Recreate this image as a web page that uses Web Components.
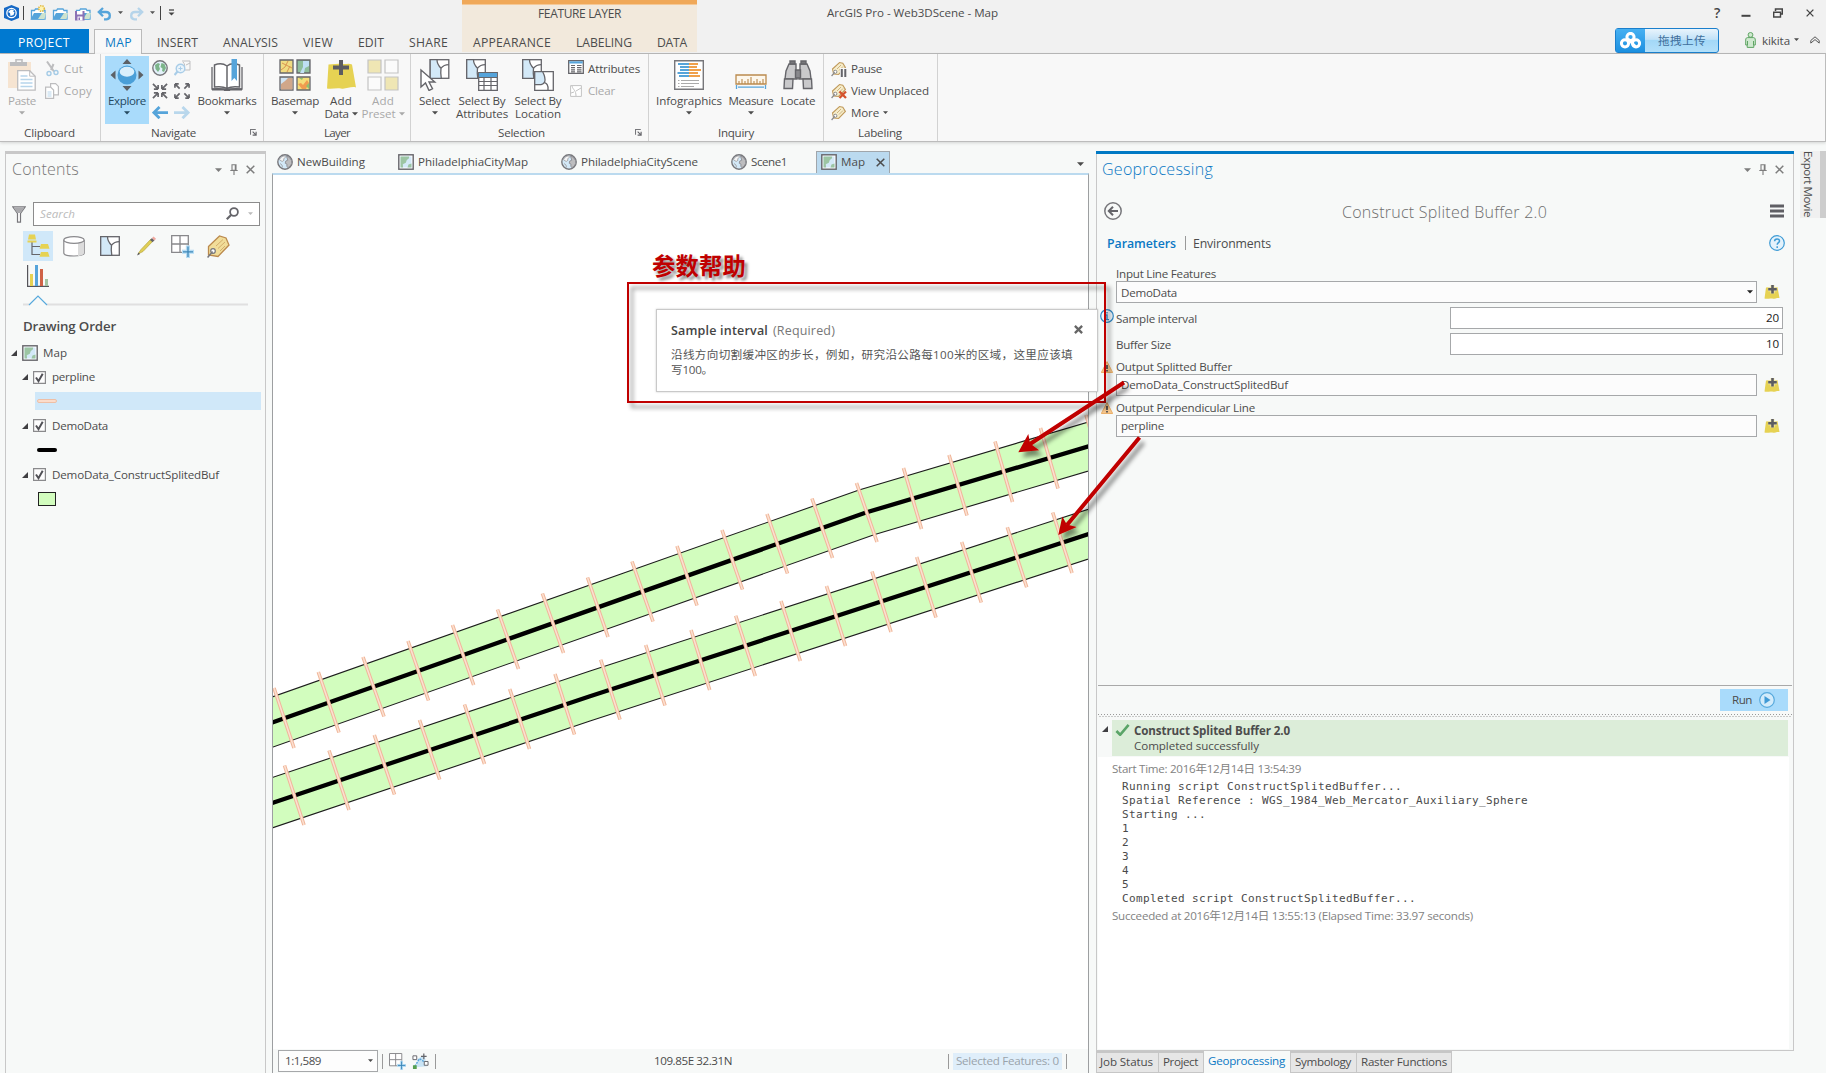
<!DOCTYPE html>
<html lang="en"><head><meta charset="utf-8"><title>ArcGIS Pro - Web3DScene - Map</title>
<style>
html,body{margin:0;height:100%;overflow:hidden;background:#f7f9f8}
body{font-family:"Open Sans","Noto Sans CJK SC",sans-serif;font-size:11.6px;color:#4c4c4c}
</style></head><body><app-window></app-window>
<script>
const fitted=[];
function define(name,css,html){
  const t=document.createElement('template');
  t.innerHTML='<style>*{box-sizing:border-box}'+css+'</style>'+html;
  customElements.define(name,class extends HTMLElement{
    constructor(){super();this.attachShadow({mode:'open'}).appendChild(document.importNode(t.content,true));}
  });
}
/* Text run with a fixed advance width: tracking is adjusted to fill it. */
customElements.define('t-x',class extends HTMLElement{
  constructor(){super();this.attachShadow({mode:'open'}).innerHTML='<style>:host{display:inline-block;white-space:pre;flex:none;line-height:16px}:host([v]){writing-mode:vertical-rl}span{display:inline-block}</style><span><slot></slot></span>';}
  connectedCallback(){fitted.push(this);}
  fit(){
    const w=+this.getAttribute('w');if(!w)return;
    const v=this.hasAttribute('v'),s=this.shadowRoot.querySelector('span');
    const r=s.getBoundingClientRect(),n=[...this.textContent].length;
    s.style.letterSpacing=((w-(v?r.height:r.width))/n).toFixed(3)+'px';
    this.style[v?'height':'width']=w+'px';
  }
});
const G='#65656a',B='#56a4da',Y='#e6d253';
const tag=`<path d="M1.5 8 8.5 1.5l3.3.8 2.6 4.2-6.8 7-5-.5z" fill="#f6edcb" stroke="#c09a5c" stroke-width="1.1"/><path d="m6 8 4-4M8 9.5l4-4" stroke="#c8ab77" stroke-width=".9"/><circle cx="4.3" cy="10.8" r="1.6" fill="#fff" stroke="#8a8a8c"/><path d="m.6 15 3-3.6" stroke="#8a8a8c" stroke-width="1.2"/>`;
const sel=()=>`<g fill="#fff" stroke="${G}" stroke-width="1.3"><rect x=".7" y=".7" width="18.6" height="18.6"/><path d="M.7.7h6.8c0 3 1.5 6 4 8.5-.5 4-.5 6 .3 10.1H.7z" fill="#d3e9f8"/><path d="M11.5 9.2c2-2.6 4.500-3.6 7.800-3.6" fill="none"/></g>`;
const globe=`<circle cx="8" cy="8" r="7.2" fill="#d3e9f8" stroke="#77777b" stroke-width="1.4"/><path d="M2.200 5.500 5 2.500l2.800-.8.7 1.600-1.800 1.400.2 1.600-1.700 1.200z" fill="#f4f4f4" stroke="#9a9a9d" stroke-width=".8"/><path d="m9.500 2.200 2.500.8 2.500 3.500.2 3-1.500 2.500-2.200 1.700-1.200-1.200.2-2.300-1.800-1 .6-2.200 2-.8z" fill="#bdbdbf" stroke="#85858a" stroke-width=".8"/><path d="m3 9.500 2 1.500.5 2.500" fill="none" stroke="#9a9a9d" stroke-width=".8"/>`;
const mapico=`<rect x=".8" y=".8" width="14.4" height="14.4" fill="#fff" stroke="#65656a" stroke-width="1.4"/><path d="M2.500 2.500h11v11h-11z" fill="#d3e9f8"/><path d="M2.500 2.500h8.700l-.4 2-2 1.400-1 2.800-3 1.600.3 3.200H2.500z" fill="#9cc5a3"/><path d="m13.500 9.500-3 1-1 3h4z" fill="#9cc5a3"/>`;
const add=`<path d="M3.500 5.500 17 4.500c3 1.500 6-1 10 1l4 23c-5-1.500-10 2-15 1-5-1-9 1-14 0z" fill="${Y}"/><path d="M16 1v15M8 8.500h16" stroke="#5c5c61" stroke-width="4"/>`;
const arrs=o=>{let d=o?'M1 1l5 5M1 1h4M1 1v4M16 1l-5 5M16 1h-4M16 1v4M1 16l5-5M1 16h4M1 16v-4M16 16l-5-5M16 16h-4M16 16v-4':'M1 1l5 5M6.500 6.500v-4.500M6.500 6.500H2M16 1l-5 5M10.500 6.500v-4.500M10.500 6.500H15M1 16l5-5M6.500 10.500v4.500M6.500 10.500H2M16 16l-5-5M10.500 10.500v4.500M10.500 10.500H15';return `<path d="${d}" fill="none" stroke="#65656a" stroke-width="1.800"/>`};
const pencil=`<path d="m2 18 3-4.500L15 3l2 2L7 15.500z" fill="#e0cf55" stroke="#b8a640" stroke-width=".7"/><path d="m14 4 2-2 2.500 2.300-2 2z" fill="#66666b"/><path d="m16 2 1.500-1.500 2.500 2.300-1.500 1.700z" fill="#f1a9a0"/><path d="m1 19.500 1.500-3 1.500 1.400z" fill="#555"/>`;
const folder=`<path d="M1.500 5.500h3l1-1.500h5.500l1 1.500h3V14h-13.500z" fill="#fff" stroke="${B}" stroke-width="1.300"/><path d="M.5 14.500 4 8h12l-2 6.500z" fill="${B}"/><path d="m8 14 4-6h4l-1.500 6z" fill="#cde3cf"/>`;
const ICONS={
app:[15,16,`<path d="M7.500 0 15 3v10l-7.500 3L0 13V3z" fill="#1769c6"/><circle cx="7.500" cy="8" r="5.300" fill="#fff"/><circle cx="7.500" cy="8" r="4" fill="#1769c6"/><path d="M7 4.500 4 7l2 1 .5 3 3-1 1-3-1.500-.5 1-1.500z" fill="#fff"/>`],
fnew:[16,16,folder+`<circle cx="11.500" cy="3.500" r="2.800" fill="#fff3b0" stroke="#e0b840" stroke-dasharray="1.300 1" stroke-width="1.600"/>`],
fopen:[16,16,folder],
fsave:[17,16,`<g transform="translate(1)">${folder}</g><path d="M1 6h9.500v9.500H1z" fill="#8b72b5"/><path d="M3 6h5.500v3.500H3z" fill="#fff"/><path d="M3.500 11.500h5v4h-5z" fill="#fff"/><path d="M4.500 12.500H6V15H4.500z" fill="#8b72b5"/>`],
undo:[15,14,`<path d="M2 5h7c5 0 5 7 .5 7.300H7M6 1 1.800 5 6 9.200" fill="none" stroke="${B}" stroke-width="2.300"/>`],
redo:[15,14,`<path d="M13 5H6c-5 0-5 7-.5 7.300H8M9 1l4.200 4L9 9.200" fill="none" stroke="#b5d4ea" stroke-width="2.300"/>`],
qat:[7,8,`<path d="M1 1h5" stroke="#444" stroke-width="1.300"/><path d="M.5 3.500h6l-3 3z" fill="#444"/>`],
caret:[6,4,`<path d="M0 .3h6L3 3.500z" fill="currentColor"/>`],
help:[16,16,`<circle cx="8" cy="8" r="7.300" fill="#e4f2fb" stroke="#3e9bd5" stroke-width="1.200"/><path d="M5.600 6.200c0-3 4.900-3 4.900-.2 0 1.700-2.300 1.700-2.300 3.800M8.200 11.300v1.700" fill="none" stroke="#3e9bd5" stroke-width="1.500"/>`],
min:[10,10,`<path d="M.5 8.800h9" stroke="#444" stroke-width="2"/>`],
restore:[10,10,`<path d="M2.500 3V.9H9.300V6H7.800" fill="none" stroke="#444" stroke-width="1.500"/><path d="M.7 4.200h6.800v4.800H.7z" fill="none" stroke="#444" stroke-width="1.400"/>`],
close:[9,9,`<path d="m.7.7 7.600 7.600M8.300.7.7 8.300" stroke="currentColor" stroke-width="1.500"/>`],
closeb:[9,9,`<path d="m.9.9 7.200 7.200M8.100.9.9 8.100" stroke="currentColor" stroke-width="2.300"/>`],
pin:[8,11,`<path d="M2 .7h4v5.500H2zM.3 6.500h7.400M4 6.500V11M5.300 1v5" fill="none" stroke="#7d7d7d" stroke-width="1.100"/>`],
baidu:[21,17,`<g fill="none" stroke="#fff" stroke-width="3"><circle cx="10.500" cy="5" r="3.600"/><circle cx="5" cy="11.300" r="3.600"/><circle cx="16" cy="11.300" r="3.600"/></g><path d="m8 7 8 8" stroke="#fff" stroke-width="2.500"/>`],
user:[11,16,`<g fill="#cfe8cf" stroke="#5fa564"><circle cx="5.500" cy="2.900" r="2.400"/><path d="M.7 13V8c0-2 1-2.400 2-2.400h5.600c1 0 2 .4 2 2.400v5H8.800v2.400H2.200V13zM2.500 13V9M8.500 13V9"/></g>`],
collapse:[10,8,`<path d="M.8 4.500 5 .8l4.200 3.700v2.600L5 3.600.8 7.100z" fill="none" stroke="#555"/>`],
paste:[30,32,`<path d="M1 3h23v26H1z" fill="#f6e4d1"/><path d="M3 3h17v4H3z" fill="#bdbdbf"/><path d="M9 3V.8h6V3" fill="none" stroke="#bdbdbf" stroke-width="1.600"/><path d="M10.700 11.700h12l5.500 5.500v14h-17.500z" fill="#fff" stroke="#bdbdbf" stroke-width="1.300"/><path d="M22.700 11.700v5.500h5.500" fill="none" stroke="#bdbdbf"/><path d="M13.500 17h7M13.500 20.500h12M13.500 24h12M13.500 27.500h12" stroke="#b7d5eb" stroke-width="1.500"/>`],
cut:[14,16,`<path d="m2 .5 7 10M8.500 3 6 9" stroke="#bdbdbf" stroke-width="2"/><circle cx="4" cy="12.500" r="2" fill="none" stroke="#a5cbe6" stroke-width="1.400"/><circle cx="11" cy="11.500" r="2" fill="none" stroke="#a5cbe6" stroke-width="1.400"/>`],
copy:[14,16,`<g fill="#fff" stroke="#bdbdbf" stroke-width="1.200"><path d="M5.600.6h5l2.800 2.800v8.500H5.600z"/><path d="M.6 4.100h5l3 3v8.300h-8z"/></g><path d="M2.500 9h4M2.500 11h4M2.500 13h4" stroke="#b7d5eb"/>`],
explore:[34,32,`<g fill="#5c6166"><path d="M12.500 5 17 0l4.500 5zM12.500 27l4.500 5 4.500-5zM5.500 11.500.5 16l5 4.500zM28.500 11.500l5 4.500-5 4.500z"/></g><circle cx="17" cy="16" r="9.500" fill="#4a9fd8"/><ellipse cx="17" cy="12.700" rx="7.300" ry="5" fill="#d9effc"/>`],
gfull:[16,16,`<circle cx="8" cy="8" r="7.200" fill="#e3f1fa" stroke="#77777b" stroke-width="1.400"/><path d="M3 5 6 3l2 1-1 2 1 3-2 3-2.500-3zM9.500 3l3 1 1.500 4-2 4-2-1 .5-2.500-2-1.500z" fill="#7db58a"/>`],
zsel:[17,16,`<path d="M8 1h8v9h-5" fill="none" stroke="#c0c0c2"/><path d="M9 2c2 2 2 4 1 7M12 5l4-2" stroke="#c0c0c2" fill="none"/><circle cx="6.500" cy="8.500" r="4.300" fill="#eaf4fb" stroke="#a9cde8" stroke-width="1.400"/><path d="m.5 15 3-3.500" stroke="#a9cde8" stroke-width="2.200"/><path d="M4.500 8.500h4M6.500 6.500v4" stroke="#a9cde8"/>`],
fin:[17,17,arrs(0)],fout:[17,17,arrs(1)],
left:[17,14,`<path d="M2 7h15M8 1 2 7l6 6" fill="none" stroke="${B}" stroke-width="3"/>`],
right:[17,14,`<path d="M15 7H0M9 1l6 6-6 6" fill="none" stroke="#b9d7ec" stroke-width="3"/>`],
book:[32,32,`<path d="M1 8v22c5-.5 10-.5 15 .5 5-1 10-1 15-.5V8" fill="#fff" stroke="${G}" stroke-width="1.300"/><path d="M3.500 28V6c5-2 9-1.500 12.500 1 3-2.500 7.500-3 12.500-1v22c-5-.7-9-.5-12.500 1.500-3.500-2-7.500-2.200-12.500-1.500zM16 7v22" fill="#fff" stroke="${G}" stroke-width="1.500"/><path d="M1 30.500h12c1 1.500 5 1.500 6 0h12" stroke="${G}" stroke-width="2" fill="none"/><path d="M20.500 0h5.500v22l-2.700-3-2.800 3z" fill="${B}"/>`],
basemap:[32,32,`<g stroke="#65656a" stroke-width="1.300"><path d="M1 1h13v13H1z" fill="#f0dc82"/><path d="M18 1h13v13H18z" fill="#8fbf9c"/><path d="M1 18h13v13H1z" fill="#d0e4f3"/><path d="M18 18h13v13H18z" fill="#f4de7a"/></g><path d="M2 11 6 8l3-6M3 4l10 5M8 13l3-6" stroke="#d99550" fill="none"/><path d="M24 2h6v5l-4 2-1 5h-4l3-6z" fill="#bfe0f4"/><path d="M2 25 6 22l3-3h4.500v11.500H2z" fill="#d0a78a"/><path d="M19 25l3-1 2 2 4-5 2 3-3 6h-4z" fill="#f09c4f"/><path d="M20 19l3 2 1-2zM27 27l3-3v6z" fill="#8dc06f"/>`],
add:[32,32,add],
adds:[16,16,`<path d="M2 3.500 8 3c2 .5 4-.5 5.500.3L15.500 14c-2.500-.5-5 1-7.500.6-2.500-.5-4.500.6-7.500 0z" fill="${Y}"/><path d="M8.500 1v8.500M4.200 5.200h8.600" stroke="#f4ecb5" stroke-width="4"/><path d="M8.500 1v8.500M4.200 5.200h8.600" stroke="#5c5c61" stroke-width="2.600"/>`],
preset:[32,32,`<g stroke="#c3c3c3" stroke-width="1.200" fill="#fbfbfb"><path d="M1 1h13v13H1z" fill="#efe6b4"/><path d="M18 1h13v13H18z"/><path d="M1 18h13v13H1z"/><path d="M18 18h13v13H18z" fill="#efe6b4"/></g>`],
select:[30,32,`<g transform="translate(9.500)">${sel()}</g><path d="M1 11v17l4.500-4 3.500 7.500 3.500-1.700-3.500-6.800h5.800z" fill="#fff" stroke="${G}" stroke-width="1.400"/>`],
selattr:[32,32,sel()+`<path d="M12.700 13.700h18.600v17.600H12.700z" fill="#fff" stroke="${G}" stroke-width="1.300"/><path d="M13 14h18v4H13z" fill="${B}"/><path d="M13 18.500h18M13 22.500h18M13 26.500h18M18 18v13M25 18v13" stroke="${G}" stroke-width="1.200"/>`],
selloc:[32,32,sel()+`<g fill="#fff" stroke="${G}" stroke-width="1.300"><path d="M12.700 12.700h18.600v18.600H12.700z"/><path d="M12.700 12.700h8c2 4 3 7 2 10-1 3-4 3-6 3h-4z" fill="#d3e9f8"/><path d="M22.500 23.500c2 1 4 2 3.500 7.500" fill="none"/></g>`],
attrs:[16,14,`<path d="M.7.7h14.600v12.600H.7z" fill="#fff" stroke="${G}" stroke-width="1.300"/><path d="M1.300 1.300h13.400V3.500H1.300z" fill="${B}"/><path d="M3 5.500h4M3 7.700h4M3 9.800h4M3 11.800h4M9 5.500h4.500M9 7.700h4.500M9 9.800h4.500M9 11.800h4.500" stroke="${G}" stroke-width="1.200"/>`],
clear:[12,12,`<path d="M.6.600h10.800v10.800H.6z" fill="#fff" stroke="#c3c3c3"/><path d="M2 1c1 4 4 4 4 10M6 6l5-3M1 8l3-1" fill="none" stroke="#c3c3c3"/>`],
info:[30,30,`<path d="M.7.7h28.600v28.600H.7z" fill="#fff" stroke="#77777b" stroke-width="1.400"/><path d="M4 4h11M6 7h9M6 10h9M3.500 13h11.500M5 16h10" stroke="${B}" stroke-width="2"/><path d="M15 4h9M15 7h8M15 10h12M15 13h9M15 16h11" stroke="#f0a04b" stroke-width="2"/><path d="M4 20.500h1.500M7 20.500h18M4 23.500h1.500M7 23.500h18M4 26.500h1.500M7 26.500h13" stroke="#aaa" stroke-width="1.200"/>`],
measure:[32,15,`<path d="M1 1h30v9H1z" fill="#fdf7ec" stroke="#bb8a4e" stroke-width="1.300"/><path d="M4 10V7M7 10V5M10 10V7M13 10V5M16 10V3M19 10V7M22 10V5M25 10V7M28 10V5" stroke="#bb8a4e" stroke-width="1.100"/><path d="M1.500 11v4M30.500 11v4M3 13.200h26" stroke="${B}" stroke-width="1.300"/>`],
locate:[30,30,`<g fill="#c9c9cb" stroke="#65656a" stroke-width="1.400"><path d="M6 4h7v6l1 9H2l1-8zM17 4h7l3 7 1 8H16l1-9z"/><path d="M7 1h5v3H7zM18 1h5v3h-5z" fill="#77777b"/><path d="M1.500 19h8.500l-.5 9.500H1zM20 19h8.500l.5 9.500h-8.500z"/><path d="M12.500 10h5v8h-5z" fill="#88888c"/></g>`],
pause:[16,16,tag+`<path d="M9 7h7v9H9z" fill="#f8f8f8"/><path d="M10.800 8v8M14.300 8v8" stroke="#65656a" stroke-width="2"/>`],
unplaced:[16,16,tag+`<path d="m8.500 8.500 6.500 6.500M15 8.500 8.500 15" stroke="#d4522c" stroke-width="2.300"/>`],
more:[16,16,tag],
launch:[8,8,`<path d="M.6 6.500V.6h6" fill="none" stroke="#77777b" stroke-width="1.200"/><path d="m3 3 3.500 3.500M7 3v4H3" fill="none" stroke="#65656a" stroke-width="1.300"/>`],
globe:[16,16,globe],map:[16,16,mapico],
funnel:[14,17,`<path d="M.8.8h12.400L8.500 7.500v8.700h-3V7.500z" fill="#fff" stroke="#77777b" stroke-width="1.200"/><path d="M1.500 1.500h11L8.500 7h-3z" fill="#aaaaad"/>`],
mag:[13,13,`<circle cx="8" cy="5" r="3.900" fill="none" stroke="#65656a" stroke-width="1.800"/><path d="M.8 12.200 5.300 7.700" stroke="#65656a" stroke-width="2.200"/>`],
tree:[24,24,`<path d="M6 8v12.500h8M6 12.500h8" fill="none" stroke="#65656a" stroke-width="1.200"/><g fill="${Y}"><path d="M3 .5h6l1 5H2zM1.500 6.500h9V8.500h-9zM15 10h7l1.500 4.800h-10zM15 18h7l1.500 4.800h-10z"/></g>`],
cyl:[22,21,`<path d="M.8 4v13c0 4 20.400 4 20.400 0V4" fill="#fff" stroke="#8a8a8d" stroke-width="1.200"/><path d="M15 7.300c3-.5 6-1.500 6-3V17c0 1.500-3 2.500-6 3z" fill="#dcdcdc"/><ellipse cx="11" cy="4" rx="10.200" ry="3.300" fill="#fff" stroke="#8a8a8d" stroke-width="1.200"/>`],
selb:[20,20,sel()],pencil:[20,20,pencil],
gridadd:[23,23,`<path d="M.7.7h16.600v16.600H.7zM9 .7v16.600M.7 9h16.600" fill="#fff" stroke="#88888b" stroke-width="1.300"/><path d="M17 10.500v12.500M11 16.800h12" stroke="#f7f9f8" stroke-width="6"/><path d="M17 10.500v12.500M11 16.800h12" stroke="#b5dcf4" stroke-width="4"/><path d="M17 11.500V22M12 16.800h10" stroke="#3d87b8" stroke-width="1.300"/>`],
tagb:[23,23,`<path d="M1.500 11.500 12.500 1 19 3l3 7-11 11.500L1.500 20z" fill="#f1dd99" stroke="#bb8a4e" stroke-width="1.300"/><path d="m9 11 7-6.500M11 13.500l7-6.500M13 16l5-5" stroke="#d3ae6d"/><circle cx="6" cy="16" r="2.300" fill="#fff" stroke="#77777b" stroke-width="1.200"/><path d="m.6 22.500 5-6" stroke="#77777b" stroke-width="1.500"/>`],
chart:[22,22,`<path d="M.6 0v21.400H22" fill="none" stroke="#55555a" stroke-width="1.200"/><path d="M3 9h3v12H3z" fill="${Y}"/><path d="M8 0h3v21H8z" fill="${B}"/><path d="M13 4h3v17h-3z" fill="#cf6246"/><path d="M18 14h3v7h-3z" fill="#a4c5a2"/>`],
exp:[7,7,`<path d="M7 0v7H0z" fill="#3f3f42"/>`],
chk:[13,13,`<path d="M.6.600h11.800v11.800H.6z" fill="#fdfdfd" stroke="#8a8a8c" stroke-width="1.200"/><path d="m3 6.500 2.500 3.700L9.700 2.800" fill="none" stroke="#505055" stroke-width="2"/>`],
back:[18,18,`<circle cx="9" cy="9" r="8.200" fill="none" stroke="#77777b" stroke-width="1.500"/><path d="M14 9H5M9 4.700 4.800 9 9 13.300" fill="none" stroke="#65656a" stroke-width="2"/>`],
burger:[14,14,`<path d="M0 2h14M0 7h14M0 12h14" stroke="#5f5f64" stroke-width="3"/>`],
inf:[14,14,`<circle cx="7" cy="7" r="6.300" fill="#eef6fb" stroke="#2f88c4" stroke-width="1.200"/><path d="M7 3v1.600M5.500 6H7v4.500M5 10.600h4" fill="none" stroke="#2f88c4" stroke-width="1.400"/>`],
warn:[12,12,`<path d="M6 .6 11.700 11.500H.3z" fill="#f6c68c" stroke="#eab06a"/><path d="M6 4v4M6 9v1.500" stroke="#4d4d4d" stroke-width="1.800"/>`],
run:[16,16,`<circle cx="8" cy="8" r="7.300" fill="#d2ebfb" stroke="#57a9dc" stroke-width="1.200"/><path d="M5.500 4v8l6-4z" fill="#3f9ad6"/>`],
ok:[16,13,`<path d="m1.500 7.500 4 4L14.500 1" fill="none" stroke="#5aa468" stroke-width="2.800"/>`],
sketch:[18,17,`<path d="M4 15 6 6l7-4 3 12z" fill="#c9e4f5"/><path d="M3 14 8 6l6 4" stroke="${B}" stroke-width="1.500" stroke-dasharray="2 1.200" fill="none"/><path d="M1 3h4v4H1zM13 9h4v4h-4z" fill="#fff" stroke="#65656a"/><path d="M1 13h4v4H1z" fill="#56a04f"/><path d="M12.500.500v6M9.500 3.500h6" stroke="#65656a" stroke-width="1.300"/>`]
};
/* Inline vector icon, picked by name. */
customElements.define('ui-icon',class extends HTMLElement{
  constructor(){super();this.attachShadow({mode:'open'});}
  connectedCallback(){
    const [w,h,d]=ICONS[this.getAttribute('n')],W=+this.getAttribute('w')||w,H=+this.getAttribute('h')||h*W/w;
    this.shadowRoot.innerHTML=`<style>:host{display:inline-block;flex:none;width:${W}px;height:${H}px;line-height:0}svg{display:block}</style><svg width="${W}" height="${H}" viewBox="0 0 ${w} ${h}" preserveAspectRatio="none">${d}</svg>`;
  }
});
define('title-bar',`:host{display:flex;height:54px;background:#f1f1f1;border-bottom:1px solid #bababa}
.l{width:462px;display:flex;flex-direction:column}.q{height:29px;display:flex;align-items:center;padding:0 0 3px 4px;color:#555}
.t{display:flex;height:24px;font-size:12.200px;line-height:24px}.t t-x{line-height:27px}
.p{background:#0079d0;color:#fff;width:89px;padding-left:18px}.m{width:48px;height:25px;margin:0 15px 0 5px;background:#f8f8f8;border:1px solid #bababa;border-bottom:0;color:#0a78c4;padding-left:10px}.m t-x{line-height:25px}
.f{width:235px;height:52px;background:#f2e9dc;border-top:4px solid #f0a858;box-shadow:inset 0 1px #f5c896;display:flex;flex-direction:column;font-size:12px}
.f .a{height:25px;flex:none;padding-left:76px;line-height:20px}.f .a t-x{line-height:20px}.f .b{display:flex;padding:4px 0 0 11px;height:23px;font-size:12.200px}.f .b t-x{line-height:19px;height:19px;margin-top:0}.f .b{padding-top:4px}
.c{width:918px;padding:5px 0 0 130px}.r{flex:1;display:flex;flex-direction:column}.w{height:26px;display:flex;align-items:center;padding-left:99px;color:#444}
.u{display:flex;align-items:center;height:26px;margin-top:1px}.bd{width:104px;height:25px;border:1px solid #1b7fcc;border-radius:3px;display:flex;background:linear-gradient(#e9f4fc,#c1e2f8 45%,#a3d8f7 50%,#b3e0fa)}
.bd i{width:29px;background:linear-gradient(#46b0f2,#1c90e0);display:flex;align-items:center;justify-content:center}.bd t-x{margin-left:13px;color:#3f6f9c;line-height:24px}`,
`<div class="l"><div class="q"><ui-icon n="app"></ui-icon><i style="width:1px;height:14px;background:#444;margin:0 6px 0 4px"></i><ui-icon n="fnew"></ui-icon><ui-icon n="fopen" style="margin:0 6px"></ui-icon><ui-icon n="fsave"></ui-icon><ui-icon n="undo" style="margin:2px 6px 0 6px"></ui-icon><ui-icon n="caret" w="5"></ui-icon><ui-icon n="redo" style="margin:2px 6px 0 6px"></ui-icon><ui-icon n="caret" w="5"></ui-icon><i style="width:1px;height:14px;background:#444;margin:0 7px 0 5px"></i><ui-icon n="qat"></ui-icon></div>
<div class="t"><div class="p"><t-x w="52">PROJECT</t-x></div><div class="m"><t-x w="27">MAP</t-x></div><t-x w="41">INSERT</t-x><t-x w="55" style="margin-left:25px">ANALYSIS</t-x><t-x w="30" style="margin-left:25px">VIEW</t-x><t-x w="26" style="margin-left:25px">EDIT</t-x><t-x w="39" style="margin-left:25px">SHARE</t-x></div></div>
<div class="f"><div class="a"><t-x w="83">FEATURE LAYER</t-x></div><div class="b"><t-x w="78">APPEARANCE</t-x><t-x w="56" style="margin-left:25px">LABELING</t-x><t-x w="30" style="margin-left:25px">DATA</t-x></div></div>
<div class="c"><t-x w="171">ArcGIS Pro - Web3DScene - Map</t-x></div>
<div class="r"><div class="w"><t-x w="8" style="font-size:14px;font-weight:600">?</t-x><ui-icon n="min" style="margin:-2px 22px 0 19px"></ui-icon><ui-icon n="restore"></ui-icon><ui-icon n="close" w="8" style="margin-left:23px"></ui-icon></div>
<div class="u"><div class="bd"><i><ui-icon n="baidu"></ui-icon></i><t-x w="48">拖拽上传</t-x></div><ui-icon n="user" style="margin:0 6px 0 26px"></ui-icon><t-x w="28" style="margin-top:2px">kikita</t-x><ui-icon n="caret" w="5" style="margin:0 11px 0 4px"></ui-icon><ui-icon n="collapse"></ui-icon></div></div>`);
define('ribbon-group',`:host{display:flex;flex-direction:column;flex:none;height:87px;border-right:1px solid #d2d2d2}.c{display:flex;height:70px;padding-top:2px}.f{display:flex;height:16px;margin-top:1px;position:relative}::slotted([slot=label]){line-height:16px}`,
`<div class="c"><slot></slot></div><div class="f"><slot name="label"></slot></div>`);
define('big-button',`:host{display:flex;flex:none;flex-direction:column;align-items:center;height:68px;padding-top:3px}:host([on]){background:#a9dbfb;color:#25495f}:host([off]){color:#a9a9a9}
.i{height:32px;display:flex;align-items:center;justify-content:center}.t{display:flex;flex-direction:column;align-items:center;margin-top:3px}.t ::slotted(*){line-height:13px!important;height:13px}.t ::slotted(ui-icon){margin-top:4px;height:4px}`,
`<div class="i"><slot name="icon"></slot></div><div class="t"><slot></slot></div>`);
define('tool-row',`:host{display:flex;align-items:center;height:22px}:host([off]){color:#a9a9a9}.i{width:16px;margin-right:4px;display:flex;justify-content:center}`,`<div class="i"><slot name="icon"></slot></div><slot></slot>`);
define('ribbon-bar',`:host{display:flex;height:88px;background:#f8f8f8;border-bottom:1px solid #bcbcbc;border-right:1px solid #bcbcbc;box-shadow:0 1px 3px rgba(0,0,0,.15);position:relative}
.col{display:flex;flex-direction:column;padding-top:2px}.g{display:grid;grid-template-columns:16px 17px;column-gap:6px;align-content:start;row-gap:7px;margin:4px 6px 0 3px}.r{display:flex;height:13px;align-items:center}.r t-x{line-height:13px}`,
`<ribbon-group style="width:101px"><big-button off style="width:34px;margin-left:5px"><ui-icon slot="icon" n="paste"></ui-icon><t-x w="28">Paste</t-x><ui-icon n="caret"></ui-icon></big-button>
<div class="col" style="margin-left:5px"><tool-row off><ui-icon slot="icon" n="cut"></ui-icon><t-x w="19">Cut</t-x></tool-row><tool-row off><ui-icon slot="icon" n="copy"></ui-icon><t-x w="28">Copy</t-x></tool-row></div><t-x slot="label" w="51" style="margin-left:24px">Clipboard</t-x></ribbon-group>
<ribbon-group style="width:163px"><big-button on style="width:44px;margin-left:4px"><ui-icon slot="icon" n="explore"></ui-icon><t-x w="38">Explore</t-x><ui-icon n="caret"></ui-icon></big-button>
<div class="g"><ui-icon n="gfull"></ui-icon><ui-icon n="zsel"></ui-icon><ui-icon n="fin" w="16"></ui-icon><ui-icon n="fout" w="16"></ui-icon><ui-icon n="left" w="16"></ui-icon><ui-icon n="right" w="16"></ui-icon></div>
<big-button style="width:62px;margin-left:-1px"><ui-icon slot="icon" n="book"></ui-icon><t-x w="59">Bookmarks</t-x><ui-icon n="caret"></ui-icon></big-button><t-x slot="label" w="45" style="margin-left:50px">Navigate</t-x><ui-icon slot="label" n="launch" w="7" style="margin:4px 0 0 54px"></ui-icon></ribbon-group>
<ribbon-group style="width:147px"><big-button style="width:52px;margin-left:5px"><ui-icon slot="icon" n="basemap"></ui-icon><t-x w="48">Basemap</t-x><ui-icon n="caret"></ui-icon></big-button>
<big-button style="width:38px;margin-left:1px"><ui-icon slot="icon" n="add"></ui-icon><t-x w="22">Add</t-x><div class="r"><t-x w="24">Data</t-x><ui-icon n="caret" style="margin-left:3px"></ui-icon></div></big-button>
<big-button off style="width:46px"><ui-icon slot="icon" n="preset"></ui-icon><t-x w="22">Add</t-x><div class="r"><t-x w="34">Preset</t-x><ui-icon n="caret" style="margin-left:3px"></ui-icon></div></big-button><t-x slot="label" w="26" style="margin-left:60px">Layer</t-x></ribbon-group>
<ribbon-group style="width:238px"><big-button style="width:35px;margin-left:6px"><ui-icon slot="icon" n="select"></ui-icon><t-x w="31">Select</t-x><ui-icon n="caret"></ui-icon></big-button>
<big-button style="width:54px;margin-left:3px"><ui-icon slot="icon" n="selattr"></ui-icon><t-x w="47">Select By</t-x><t-x w="52">Attributes</t-x></big-button>
<big-button style="width:50px;margin-left:4px"><ui-icon slot="icon" n="selloc"></ui-icon><t-x w="47">Select By</t-x><t-x w="46">Location</t-x></big-button>
<div class="col" style="margin-left:5px"><tool-row><ui-icon slot="icon" n="attrs" style="margin-top:-4px"></ui-icon><t-x w="52">Attributes</t-x></tool-row><tool-row off><ui-icon slot="icon" n="clear"></ui-icon><t-x w="27">Clear</t-x></tool-row></div><t-x slot="label" w="47" style="margin-left:87px">Selection</t-x><ui-icon slot="label" n="launch" w="7" style="margin:4px 0 0 90px"></ui-icon></ribbon-group>
<ribbon-group style="width:175px"><big-button style="width:68px;margin-left:6px"><ui-icon slot="icon" n="info"></ui-icon><t-x w="66">Infographics</t-x><ui-icon n="caret"></ui-icon></big-button>
<big-button style="width:48px;margin-left:4px"><ui-icon slot="icon" n="measure" style="margin-top:12px"></ui-icon><t-x w="45">Measure</t-x><ui-icon n="caret"></ui-icon></big-button>
<big-button style="width:38px;margin-left:4px"><ui-icon slot="icon" n="locate"></ui-icon><t-x w="35">Locate</t-x></big-button><t-x slot="label" w="36" style="margin-left:69px">Inquiry</t-x></ribbon-group>
<ribbon-group style="width:114px"><div class="col" style="margin-left:7px"><tool-row><ui-icon slot="icon" n="pause"></ui-icon><t-x w="31">Pause</t-x></tool-row><tool-row><ui-icon slot="icon" n="unplaced"></ui-icon><t-x w="78">View Unplaced</t-x></tool-row><tool-row style="height:23px"><ui-icon slot="icon" n="more"></ui-icon><t-x w="28">More</t-x><ui-icon n="caret" w="5" style="margin-left:4px"></ui-icon></tool-row></div><t-x slot="label" w="44" style="margin-left:34px">Labeling</t-x></ribbon-group>`);
define('pane-head',`:host{display:flex;height:33px;border-top:3px solid #c8c8c8;align-items:center;color:#777;padding:0 10px 0 6px;font-size:16px;font-weight:300;flex:none}:host([on]){border-color:#0079c4;color:#0a78c4}.s{flex:1}.b{display:flex;align-items:center;color:#7d7d7d}::slotted(t-x){line-height:30px!important}`,
`<slot></slot><div class="s"></div><div class="b"><ui-icon n="caret" w="7" style="margin-top:3px"></ui-icon><ui-icon n="pin" style="margin:0 8px 0 8px"></ui-icon><ui-icon n="close"></ui-icon></div>`);
define('contents-pane',`:host{display:flex;flex-direction:column;width:261px;margin-left:5px;border:1px solid #c8c8c8;border-top:0;border-bottom:0}
.s{display:flex;margin-top:18px;height:24px;padding-left:6px}.bx{width:227px;height:24px;border:1px solid #8c8c8c;background:#fff;margin-left:7px;display:flex;align-items:center;padding-left:6px;color:#bbb;font-style:italic}
.ic{display:flex;margin:5px 0 0 17px;height:30px;align-items:center}.hl{width:30px;height:30px;background:#d0e8f9;display:flex;align-items:center;justify-content:center}
.tr{display:flex;height:24.4px;align-items:center}.li{width:20px;height:4px;border-radius:2px}`,
`<pane-head style="margin:0 -1px;padding:0 11px 0 7px"><t-x w="67">Contents</t-x></pane-head><div class="s"><ui-icon n="funnel" style="margin-top:4px"></ui-icon><div class="bx"><t-x w="35">Search</t-x><ui-icon n="mag" style="margin:-2px 0 0 151px"></ui-icon><ui-icon n="caret" w="5" style="margin-left:9px"></ui-icon></div></div>
<div class="ic"><div class="hl"><ui-icon n="tree"></ui-icon></div><ui-icon n="cyl" style="margin-left:10px"></ui-icon><ui-icon n="selb" style="margin-left:15px"></ui-icon><ui-icon n="pencil" style="margin-left:16px"></ui-icon><ui-icon n="gridadd" style="margin-left:15px"></ui-icon><ui-icon n="tagb" style="margin-left:13px"></ui-icon></div>
<ui-icon n="chart" style="margin:4px 0 0 21px"></ui-icon>
<svg width="225" height="12" style="margin:8px 0 0 17px;display:block"><path d="M0 9.500h6M24 9.500h201" stroke="#e0e0e0" stroke-width="2"/><path d="M6 10 15 1l9 9" fill="none" stroke="#57a9dc" stroke-width="1.200"/></svg>
<div style="height:33.500px;padding:9px 0 0 17px;font-size:13.300px;font-weight:600;line-height:20px"><t-x w="93" style="line-height:20px">Drawing Order</t-x></div>
<div class="tr" style="padding-left:5px"><ui-icon n="exp" w="6"></ui-icon><ui-icon n="map" style="margin:0 5px"></ui-icon><t-x w="24">Map</t-x></div>
<div class="tr" style="padding-left:16px"><ui-icon n="exp" w="6"></ui-icon><ui-icon n="chk" style="margin:0 6px 0 5px"></ui-icon><t-x w="43">perpline</t-x></div>
<div class="tr"><div style="margin-left:29px;width:226px;height:18px;background:#d0e8f9;padding:7px 0 0 2px"><div class="li" style="background:#fbdccb;border:1px solid #eebfa6"></div></div></div>
<div class="tr" style="padding-left:16px"><ui-icon n="exp" w="6"></ui-icon><ui-icon n="chk" style="margin:0 6px 0 5px"></ui-icon><t-x w="56">DemoData</t-x></div>
<div class="tr" style="padding:0 0 1px 31px"><div class="li" style="background:#000"></div></div>
<div class="tr" style="padding-left:16px"><ui-icon n="exp" w="6"></ui-icon><ui-icon n="chk" style="margin:0 6px 0 5px"></ui-icon><t-x w="167">DemoData_ConstructSplitedBuf</t-x></div>
<div class="tr" style="padding:0 0 1px 32px"><div style="width:18px;height:14px;background:#d2fdbe;border:1px solid #222"></div></div>`);
/* Perpendicular sampling lines: x1,y1,x2,y2 for both roads. */
const T1=[[274,688,294,748],[318.3,672,339,732.5],[363,657,384,716.5],[408,641,428.5,700.5],[452.5,625,473.7,685],[497.5,609.5,518.5,669],[542.4,593.5,563.5,653],[587.5,577.5,608,637],[632,561.5,653,621.5],[677,546,697,605.5],[722,530,742.5,589.5],[767,514,787.5,573.5],[812,498.5,832.5,558],[856.5,483,877,542],[903.5,468,921.5,529],[949,455,967,515.5],[995,441.5,1012.5,502],[1040.5,428,1058,488.5],[1086,415,1104,475.5],
[284.5,765.5,304,825],[329,750.5,349,810],[374.3,735,394.5,794.5],[419.5,720,439.7,779.5],[464.5,704.5,484.5,764],[509.7,689,529.5,749],[555,674,574.5,734.5],[600.7,659.7,620,719.5],[645.7,645,665,705.5],[691,630,709.7,690],[735.7,615.7,755.3,676],[781,601,800.3,661],[826.5,586,845.5,646],[872,571.5,891,632],[916.7,557,936,617.5],[961.7,542,981.3,602.5],[1007.3,527.3,1026.7,587.3],[1052.7,512.5,1072,573]].map(a=>`M${a[0]} ${a[1]}L${a[2]} ${a[3]}`).join('');
define('map-tab',`:host{display:flex;height:22px;align-items:center;flex:none}:host([on]){background:#bbdaef;border:1px solid #a0a6ab;border-bottom:0;width:74px;padding:0 0 1px 4px}::slotted(t-x){margin-left:4px;line-height:20px!important}`,`<slot></slot>`);
define('map-view',`:host{display:flex;flex-direction:column;width:817px;margin-left:6px}
.t{display:flex;height:22px;padding-left:5px}.m{border:1px solid #9d9fa1;border-top:2px solid #bbdaef;border-bottom:0;height:876px;background:#fff}.m svg{display:block}
.s{height:24px;display:flex;align-items:center;border:solid #9d9fa1;border-width:0 1px;padding-left:5px}.cb{width:100px;height:22px;border:1px solid #a6a8aa;background:#fdfdfd;display:flex;align-items:center;padding-left:6px}.v{width:1px;height:15px;background:#9a9a9a}`,
`<div class="t"><map-tab><ui-icon n="globe"></ui-icon><t-x w="68">NewBuilding</t-x></map-tab><map-tab style="margin-left:33px"><ui-icon n="map"></ui-icon><t-x w="110">PhiladelphiaCityMap</t-x></map-tab><map-tab style="margin-left:33px"><ui-icon n="globe"></ui-icon><t-x w="117">PhiladelphiaCityScene</t-x></map-tab><map-tab style="margin-left:33px"><ui-icon n="globe"></ui-icon><t-x w="36">Scene1</t-x></map-tab><map-tab on style="margin-left:29px"><ui-icon n="map"></ui-icon><t-x w="24">Map</t-x><ui-icon n="close" w="9" style="margin-left:11px"></ui-icon></map-tab><ui-icon n="caret" w="7" style="margin:11px 0 0 187px"></ui-icon></div>
<div class="m"><svg width="815" height="874" viewBox="273 175 815 874"><g fill="#d2fdbe" stroke="#1c1c1c" stroke-width="1.100"><path d="M260 701.300 273 696.700 859 490 1100 418.500V467.500L874 534.700 273 747l-13 5z"/><path d="M260 781.700 273 777.300 590 671 1100 505.500V555.300L590 721 273 827.700l-13 4z"/></g><path d="M260 726.800 273 722.200 866.700 512.300 1100 443M260 807 273 802.700 590 696.300 1100 530.400" fill="none" stroke="#000" stroke-width="4.300"/><path d="${T1}" stroke="#f0b79b" stroke-width="3.600" fill="none"/><path d="${T1}" stroke="#fce0d1" stroke-width="1.500" fill="none"/></svg></div>
<div class="s"><div class="cb"><t-x w="36">1:1,589</t-x><ui-icon n="caret" w="5" style="margin-left:47px"></ui-icon></div><i class="v" style="margin:0 6px 0 4px"></i><ui-icon n="gridadd" w="17"></ui-icon><ui-icon n="sketch" w="17" style="margin:0 6px 0 6px"></ui-icon><i class="v"></i><t-x w="78" style="margin-left:218px">109.85E 32.31N</t-x><i class="v" style="margin:0 4px 0 216px"></i><div style="background:#dfeefa;width:109px;height:17px;padding-left:3px;color:#9aa3aa"><t-x w="103">Selected Features: 0</t-x></div><i class="v" style="margin-left:4px"></i></div>`);
define('form-box',`:host{display:flex;align-items:center;height:22px;border:1px solid #a6a8aa;background:#fcfcfc;padding-left:4px;flex:none;width:641px}:host([num]){width:333px;background:#fff;justify-content:flex-end;padding-right:3px;color:#222}`,`<slot></slot>`);
define('geo-pane',`:host{display:flex;flex-direction:column;width:698px;margin-left:7px}.p{height:900px;border:1px solid #c8c8c8;border-top:0;display:flex;flex-direction:column}.p pane-head{margin:0 -1px}
.h{display:flex;height:18px;margin-top:18px;align-items:center;padding-left:7px}.n{display:flex;height:18px;margin-top:14px;padding:1px 0 0 10px;font-size:12.300px}
.lb{padding-left:19px;height:16px;line-height:16px;position:relative}.rw{display:flex;align-items:center;padding-left:19px;height:22px}.bg{position:absolute;left:4px;top:2px}
.out{flex:none;display:flex;height:36px}.gr{background:#dcedd9;width:676px;height:36px;display:flex;padding-left:3px}.lg{background:#fff;margin:1px 4px 1px 1px;height:292px;padding-left:14px;color:#828282}
.lg pre{margin:3px 0 2px 10px;font:11px/14px "DejaVu Sans Mono",monospace;color:#4a4a4a}.lg pre t-x{display:block;line-height:14px;height:14px}
.tb{display:flex;height:22px}.tb div{border:1px solid #c6c6c6;background:#e6e6e6;height:22px;box-shadow:inset 0 1px #c6c6c6}.tb t-x{line-height:20px}`,
`<div class="p"><pane-head on><t-x w="111">Geoprocessing</t-x></pane-head>
<div class="h"><ui-icon n="back"></ui-icon><t-x w="205" style="margin:2px 0 0 220px;font-size:16px;font-weight:300;line-height:20px;color:#6e6e6e">Construct Splited Buffer 2.0</t-x><ui-icon n="burger" style="margin-left:223px"></ui-icon></div>
<div class="n"><t-x w="69" style="color:#0a78c4;font-weight:600;line-height:18px">Parameters</t-x><i style="width:1px;height:14px;background:#999;margin:1px 7px 0 9px"></i><t-x w="78" style="line-height:18px">Environments</t-x><ui-icon n="help" style="margin-left:498px"></ui-icon></div>
<div class="lb" style="margin-top:14px;height:15px"><t-x w="100">Input Line Features</t-x></div>
<div class="rw"><form-box><t-x w="56" style="margin-top:1px">DemoData</t-x><ui-icon n="caret" w="6" style="margin-left:570px;color:#222"></ui-icon></form-box><ui-icon n="adds" w="16" style="margin-left:7px"></ui-icon></div>
<div class="rw" style="margin-top:4px;position:relative"><ui-icon n="inf" class="bg" style="left:3px"></ui-icon><t-x w="81" style="margin:1px 253px 0 0">Sample interval</t-x><form-box num><t-x w="13">20</t-x></form-box></div>
<div class="rw" style="margin-top:4px"><t-x w="55" style="margin:1px 279px 0 0">Buffer Size</t-x><form-box num><t-x w="13">10</t-x></form-box></div>
<div class="lb" style="margin-top:4px;height:15px"><ui-icon n="warn" class="bg"></ui-icon><t-x w="116">Output Splitted Buffer</t-x></div>
<div class="rw"><form-box><t-x w="167">DemoData_ConstructSplitedBuf</t-x></form-box><ui-icon n="adds" w="16" style="margin-left:7px"></ui-icon></div>
<div class="lb" style="margin-top:4px;height:15px"><ui-icon n="warn" class="bg"></ui-icon><t-x w="139">Output Perpendicular Line</t-x></div>
<div class="rw"><form-box><t-x w="43">perpline</t-x></form-box><ui-icon n="adds" w="16" style="margin-left:7px"></ui-icon></div>
<div style="flex:1"></div>
<div style="border-top:1px solid #a9a9a9;margin:0 1px;height:29px;display:flex;justify-content:flex-end;padding:3px 4px 0 0"><div style="width:68px;height:22px;background:#a9dbfb;display:flex;align-items:center;padding-left:12px"><t-x w="20">Run</t-x><ui-icon n="run" style="margin-left:7px"></ui-icon></div></div>
<svg width="694" height="3" style="margin:0 1px 3px;flex:none"><path d="M0 .5h694" stroke="#999" stroke-dasharray="1 2"/><path d="M1.500 2.500h692" stroke="#999" stroke-dasharray="1 2"/></svg>
<div class="out"><ui-icon n="exp" w="6" style="margin:6px 4px 0 5px"></ui-icon><div class="gr"><ui-icon n="ok" w="15" style="margin:4px 4px 0 0"></ui-icon><div style="display:flex;flex-direction:column;padding-top:3px"><t-x w="156" style="font-weight:700;line-height:15px">Construct Splited Buffer 2.0</t-x><t-x w="125" style="line-height:15px">Completed successfully</t-x></div></div></div>
<div class="lg"><t-x w="189" style="margin-top:4px">Start Time: 2016年12月14日 13:54:39</t-x><pre><t-x w="280">Running script ConstructSplitedBuffer...</t-x><t-x w="406">Spatial Reference : WGS_1984_Web_Mercator_Auxiliary_Sphere</t-x><t-x w="84">Starting ...</t-x><t-x w="7">1</t-x><t-x w="7">2</t-x><t-x w="7">3</t-x><t-x w="7">4</t-x><t-x w="7">5</t-x><t-x w="294">Completed script ConstructSplitedBuffer...</t-x></pre><t-x w="361">Succeeded at 2016年12月14日 13:55:13 (Elapsed Time: 33.97 seconds)</t-x></div></div>
<div class="tb"><div style="width:63px;padding-left:3px"><t-x w="53">Job Status</t-x></div><div style="width:45px;padding-left:4px;border-left:0"><t-x w="35">Project</t-x></div><t-x w="77" style="margin:0 5px 0 4px;color:#0a78c4">Geoprocessing</t-x><div style="width:67px;padding-left:4px"><t-x w="56">Symbology</t-x></div><div style="width:95px;padding-left:4px;border-left:0"><t-x w="86">Raster Functions</t-x></div></div>`);
define('side-tab',`:host{display:flex;margin-left:6px;width:26px;height:67px;background:#f0f0f0;border-right:6px solid #cdcdcd}t-x{line-height:16px;margin-left:0}`,`<t-x v w="66">Export Movie</t-x>`);
/* Annotation layer lying above map and pane. */
define('note-layer',`:host{position:absolute;inset:0;pointer-events:none}
.c{position:absolute;left:656px;top:309px;width:442px;height:83px;background:#fff;border:1px solid #c9c9c9;box-shadow:0 0 2px rgba(0,0,0,.2);padding:12px 0 0 14px}
.r{display:flex;font-size:12.500px;align-items:center;height:17px;color:#777}.l{display:flex;flex-direction:column;margin-top:9px;color:#555}.l t-x{line-height:14.500px}
h2{position:absolute;left:652px;top:249px;margin:0;font:700 23.300px/32px "Noto Sans CJK SC",sans-serif;color:#c00000;text-shadow:3px 3px 3px rgba(0,0,0,.45)}svg{position:absolute;left:0;top:0}`,
`<div class="c"><div class="r"><t-x w="97" style="font-weight:600;color:#444">Sample interval</t-x><t-x w="62" style="margin:0 239px 0 5px">(Required)</t-x><ui-icon n="closeb" w="9" style="color:#666;margin-top:-3px"></ui-icon></div><div class="l"><t-x w="402">沿线方向切割缓冲区的步长，例如，研究沿公路每100米的区域，这里应该填</t-x><t-x w="42">写100。</t-x></div></div>
<h2><t-x w="94" style="line-height:32px">参数帮助</t-x></h2>
<svg width="1826" height="1073"><defs><filter id="s" x="-10%" y="-10%" width="125%" height="125%"><feDropShadow dx="4" dy="5" stdDeviation="2" flood-color="#000" flood-opacity=".45"/></filter></defs>
<rect x="628" y="283" width="477" height="119" fill="none" stroke="#c00000" stroke-width="2" filter="url(#s)"/>
<g filter="url(#s)" fill="#c00000"><path d="M1124 382.500 1030 444M1139.500 437.500 1067 525" stroke="#c00000" stroke-width="4"/><path d="m1018.300 452.300 10-18.300 1.800 9.600 9 6.700zM1058.300 535l4-18.500 4.500 8 9.900 2.500z"/></g></svg>`);
define('app-window',`:host{display:flex;flex-direction:column;width:1826px;height:1073px;position:relative;overflow:hidden;background:#f7f9f8}.w{display:flex;height:922px;margin-top:9px}`,
`<title-bar></title-bar><ribbon-bar></ribbon-bar><div class="w"><contents-pane></contents-pane><map-view></map-view><geo-pane></geo-pane><side-tab></side-tab></div><note-layer></note-layer>`);
fitted.forEach(e=>e.fit());
</script></body></html>
